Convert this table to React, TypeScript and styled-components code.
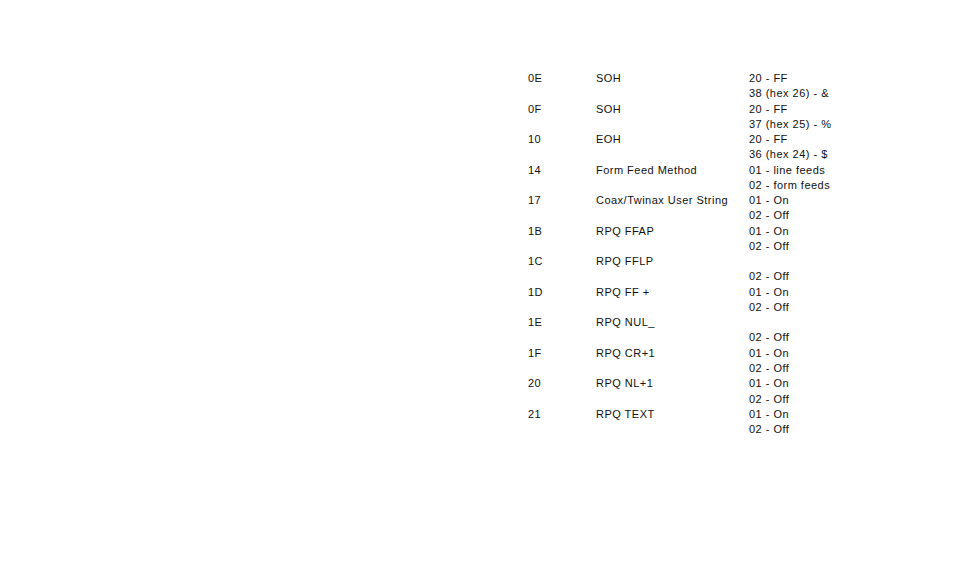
import React from 'react';
import styled, { createGlobalStyle } from 'styled-components';

const GlobalStyle = createGlobalStyle`
  html, body {
    margin: 0;
    padding: 0;
    background: #ffffff;
  }
`;

// code / name / option lines ('' leaves the line blank)
const rows = [
  { code: '0E', name: 'SOH', values: ['20 - FF', '38 (hex 26) - &'] },
  { code: '0F', name: 'SOH', values: ['20 - FF', '37 (hex 25) - %'] },
  { code: '10', name: 'EOH', values: ['20 - FF', '36 (hex 24) - $'] },
  { code: '14', name: 'Form Feed Method', values: ['01 - line feeds', '02 - form feeds'] },
  { code: '17', name: 'Coax/Twinax User String', values: ['01 - On', '02 - Off'] },
  { code: '1B', name: 'RPQ FFAP', values: ['01 - On', '02 - Off'] },
  { code: '1C', name: 'RPQ FFLP', values: ['', '02 - Off'] },
  { code: '1D', name: 'RPQ FF +', values: ['01 - On', '02 - Off'] },
  { code: '1E', name: 'RPQ NUL_', values: ['', '02 - Off'] },
  { code: '1F', name: 'RPQ CR+1', values: ['01 - On', '02 - Off'] },
  { code: '20', name: 'RPQ NL+1', values: ['01 - On', '02 - Off'] },
  { code: '21', name: 'RPQ TEXT', values: ['01 - On', '02 - Off'] },
];

const Page = styled.div`
  width: 954px;
  height: 580px;
  box-sizing: border-box;
  padding: 71px 0 0 528px;
  font-family: 'Liberation Sans', Arial, sans-serif;
  font-size: 11px;
  letter-spacing: 0.48px;
  color: #111;
`;

const Table = styled.div`
  display: grid;
  grid-template-columns: 68px 153px auto;
  line-height: 15.26px;
`;

const Cell = styled.div<{ $col: number }>`
  grid-column: ${({ $col }) => $col};
  white-space: pre;
  min-height: 15.26px;
`;

const Options = styled.div`
  grid-column: 3;
  display: flex;
  flex-direction: column;
`;

const Option = styled.span`
  min-height: 15.26px;
`;

export default function App() {
  return (
    <>
      <GlobalStyle />
      <Page>
        <Table>
          {rows.map((row) => (
            <React.Fragment key={row.code}>
              <Cell $col={1}>{row.code}</Cell>
              <Cell $col={2}>{row.name}</Cell>
              <Options>
                {row.values.map((v, i) => (
                  <Option key={i}>{v}</Option>
                ))}
              </Options>
            </React.Fragment>
          ))}
        </Table>
      </Page>
    </>
  );
}
